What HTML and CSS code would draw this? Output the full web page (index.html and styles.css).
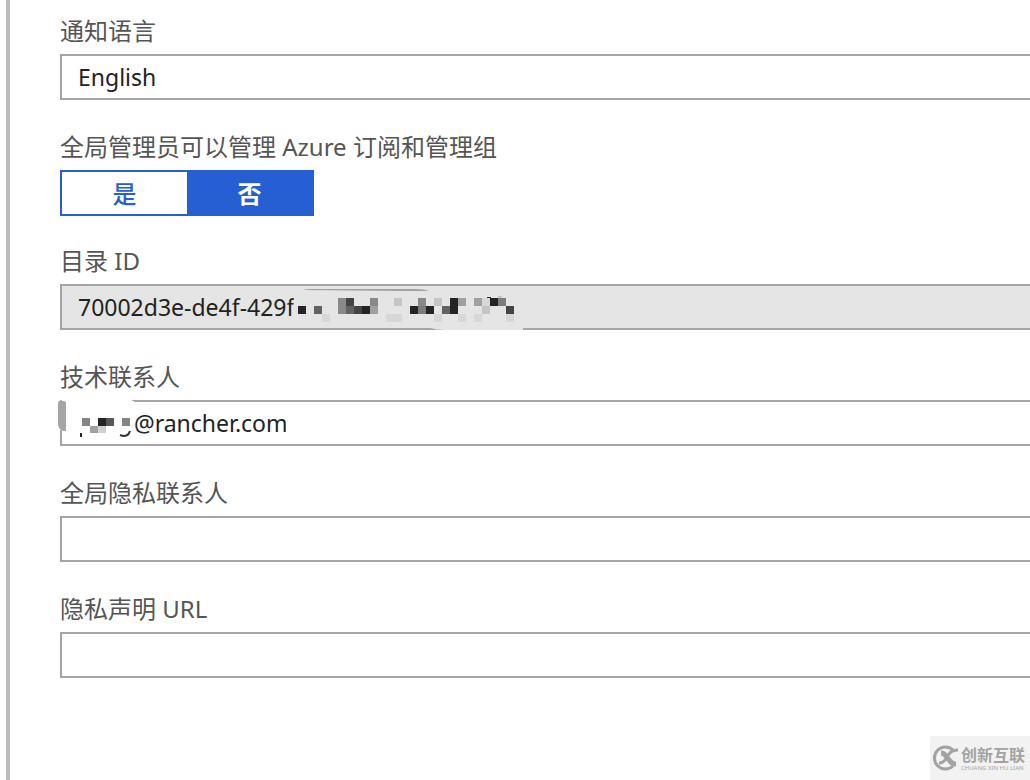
FILE: index.html
```html
<!DOCTYPE html>
<html lang="zh-CN">
<head>
    <meta charset="UTF-8">
    <meta name="viewport" content="width=device-width, initial-scale=1.0">
    <title>目录属性</title>
    <link rel="stylesheet" href="styles.css">
</head>
<body>
    <form class="panel">
        <div class="field">
            <label for="language">通知语言</label>
            <select id="language" class="box">
                <option>English</option>
            </select>
        </div>

        <div class="field field-toggle">
            <span class="label" id="manage-label">全局管理员可以管理 Azure 订阅和管理组</span>
            <div class="toggle" role="group" aria-labelledby="manage-label">
                <button type="button" aria-pressed="false">是</button>
                <button type="button" class="active" aria-pressed="true">否</button>
            </div>
        </div>

        <div class="field">
            <label for="directory-id">目录 ID</label>
            <div class="control">
                <input type="text" id="directory-id" class="box" value="70002d3e-de4f-429f" readonly>
                <!-- hidden part of the ID -->
                <svg class="mask mask-id" width="232" height="46" viewBox="292 284 232 46" shape-rendering="crispEdges" aria-hidden="true">
                    <g shape-rendering="auto">
                        <path fill="#e5e5e5" d="M294 290h14v34h-18c3-8 4-20 4-34zM430 327h93v3h-78q-8 0-15-2z"/>
                        <path fill="#a0a0a0" d="M303 290q3-1 8-1h104q9 0 14 2h-24z"/>
                    </g>
                    <path fill="#242424" d="M298 306h8v8h-8zM362 306h8v8h-8zM410 306h8v8h-8zM426 306h8v8h-8zM450 298h8v16h-8zM490 298h8v8h-8zM487 297h4v2h-4z"/>
                    <path fill="#444" d="M346 298h8v8h-8zM354 306h8v8h-8zM506 306h8v8h-8z"/>
                    <path fill="#626262" d="M314 306h8v8h-8zM346 306h8v8h-8zM442 306h8v8h-8z"/>
                    <path fill="#7c7c7c" d="M418 306h8v8h-8zM498 298h8v8h-8z"/>
                    <path fill="#898989" d="M338 298h8v16h-8zM370 298h8v8h-8zM418 298h8v8h-8z"/>
                    <path fill="#a0a0a0" d="M370 306h8v8h-8zM458 298h8v8h-8zM474 298h8v8h-8z"/>
                    <path fill="#c5c5c5" d="M394 298h8v8h-8zM434 298h8v8h-8zM482 306h8v8h-8zM498 296h4v2h-4z"/>
                    <path fill="#d7d7d7" d="M482 298h8v8h-8zM322 314h8v8h-8zM386 314h16v8h-16zM434 314h8v8h-8zM458 314h8v8h-8zM474 314h8v8h-8zM506 314h8v8h-8z"/>
                </svg>
            </div>
        </div>

        <div class="field">
            <label for="tech-contact">技术联系人</label>
            <div class="control">
                <input type="email" id="tech-contact" class="box masked-value" value="@rancher.com">
                <!-- hidden part of the address -->
                <svg class="mask mask-mail" width="80" height="46" viewBox="56 400 80 46" aria-hidden="true">
                    <path fill="#fff" d="M58 400h73l4 2v32H62v-3h-4z"/>
                    <path fill="#a5a5a5" d="M60 401h4q2 0 2 2v28h-3q-5-2-5-7v-20q0-3 2-3zM60 400h2v1h-2zM60 430h2v4h-2z"/>
                    <g shape-rendering="crispEdges">
                        <path fill="#858585" d="M82 418h8v8h-8zM122 418h8v8h-8z"/>
                        <path fill="#242424" d="M98 418h8v8h-8zM80 433h2v4h-2z"/>
                        <path fill="#575757" d="M106 418h8v8h-8z"/>
                        <path fill="#a0a0a0" d="M90 426h8v7h-8z"/>
                        <path fill="#d0d0d0" d="M98 426h8v7h-8z"/>
                    </g>
                    <path fill="none" stroke="#333" stroke-width="2" d="M120 435q8 3 10-4"/>
                </svg>
            </div>
        </div>

        <div class="field">
            <label for="privacy-contact">全局隐私联系人</label>
            <input type="text" id="privacy-contact" class="box">
        </div>

        <div class="field">
            <label for="privacy-url">隐私声明 URL</label>
            <input type="url" id="privacy-url" class="box">
        </div>
    </form>

    <div class="watermark">
        <svg width="27" height="26" viewBox="0 0 27 26" fill="none" stroke="#a3a3a3" aria-hidden="true">
            <path stroke-width="3" d="M21 5A11 11 0 1 0 21 21"/>
            <path stroke-width="5" d="M9 8q3 0 5 3l4 5q2 3 6 3"/>
            <path stroke-width="3" d="M26 5q-6 0-9 4l-4 6q-2 3-6 3"/>
        </svg>
        <div class="brand">
            <span class="brand-name">创新互联</span>
            <span class="brand-sub">CHUANG XIN HU LIAN</span>
        </div>
    </div>
</body>
</html>
```

FILE: styles.css
```css
* {
    box-sizing: border-box;
}
body {
    margin: 0;
    background-color: #fff;
    font-family: "Noto Sans", "Noto Sans CJK SC", sans-serif;
    font-size: 24px;
    overflow: hidden;
}
.panel {
    min-height: 100vh;
    margin-left: 6px;
    padding: 12px 0 0 50px;
    border-left: 4px solid #bbb;
}
.field {
    display: flex;
    flex-direction: column;
    gap: 4px;
    margin-bottom: 28px;
}
.field-toggle {
    margin-bottom: 26px;
}
label, .label {
    line-height: 38px;
    color: #555;
}
.control {
    position: relative;
}
.box {
    display: block;
    width: 100%;
    height: 46px;
    margin: 0;
    padding: 0 16px;
    border: 2px solid #a5a5a5;
    border-right: none;
    border-radius: 0;
    background-color: #fff;
    color: #222;
    font: inherit;
    font-size: 23px;
    appearance: none;
    outline: none;
}
.box[readonly] {
    background-color: #e5e5e5;
}
.masked-value {
    padding-left: 72px;
}
.toggle {
    display: flex;
    width: 254px;
    height: 46px;
    border: 2px solid #255fd3;
}
.toggle button {
    flex: 1;
    padding: 0 0 2px;
    border: none;
    background-color: #fff;
    color: #255fd3;
    font: inherit;
    font-weight: 500;
    cursor: pointer;
}
.toggle .active {
    background-color: #255fd3;
    color: #fff;
    font-weight: 700;
}
.mask {
    position: absolute;
    top: 0;
    pointer-events: none;
}
.mask-id {
    left: 232px;
}
.mask-mail {
    left: -4px;
}
.watermark {
    position: fixed;
    right: 0;
    bottom: 0;
    display: flex;
    align-items: center;
    gap: 2px;
    width: 100px;
    height: 44px;
    padding-left: 2px;
    background-color: #f2f2f2;
    color: #a3a3a3;
}
.brand {
    display: flex;
    flex-direction: column;
    padding-top: 2px;
    white-space: nowrap;
}
.brand-name {
    font-size: 16px;
    font-weight: 700;
    line-height: 18px;
}
.brand-sub {
    font-size: 6px;
    line-height: 8px;
}
```
